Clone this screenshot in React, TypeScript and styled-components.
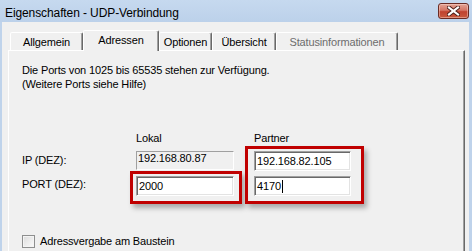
import React from "react";
import styled, { createGlobalStyle } from "styled-components";

const GlobalStyle = createGlobalStyle`
  html, body {
    margin: 0;
    padding: 0;
    background: #f0f0f0;
  }
  body {
    font-family: "Liberation Sans", Arial, sans-serif;
    color: #000;
    letter-spacing: -0.15px;
  }
`;

const tabs = [
  { label: "Allgemein", width: 73 },
  { label: "Adressen", width: 76, active: true },
  { label: "Optionen", width: 53 },
  { label: "Übersicht", width: 64 },
  { label: "Statusinformationen", width: 122, disabled: true },
];

const App = () => {
  return (
    <>
      <GlobalStyle />
      <Window>
        <TitleBar>
          <Title>Eigenschaften - UDP-Verbindung</Title>
          <CloseButton aria-label="Schließen">
            <svg width="13" height="10" viewBox="0 0 13 10">
              <path
                d="M2 1.5 L11 8.5 M11 1.5 L2 8.5"
                stroke="#4a1d18"
                strokeWidth="4"
                strokeLinecap="square"
              />
              <path
                d="M2 1.5 L11 8.5 M11 1.5 L2 8.5"
                stroke="#ffffff"
                strokeWidth="2.2"
                strokeLinecap="square"
              />
            </svg>
          </CloseButton>
        </TitleBar>

        <Body>
          <TabRow>
            {tabs.map(t => (
              <Tab
                key={t.label}
                $width={t.width}
                $active={!!t.active}
                $disabled={!!t.disabled}
              >
                {t.label}
              </Tab>
            ))}
          </TabRow>

          <Panel>
            <Intro>
              Die Ports von 1025 bis 65535 stehen zur Verfügung.
              <br />
              (Weitere Ports siehe Hilfe)
            </Intro>

            <FieldGrid>
              <ColumnHeader $col={2} $indent={6}>
                Lokal
              </ColumnHeader>
              <ColumnHeader $col={3} $indent={9}>
                Partner
              </ColumnHeader>

              <RowLabel $row={2} $offset={8}>
                IP (DEZ):
              </RowLabel>
              <RowLabel $row={3} $offset={7}>
                PORT (DEZ):
              </RowLabel>

              <StaticField>192.168.80.87</StaticField>

              <LocalHighlight>
                <EditField>2000</EditField>
              </LocalHighlight>

              <PartnerHighlight>
                <EditField>192.168.82.105</EditField>
                <EditField>
                  4170
                  <Caret />
                </EditField>
              </PartnerHighlight>
            </FieldGrid>

            <CheckRow>
              <CheckBox />
              <CheckLabel>Adressvergabe am Baustein</CheckLabel>
            </CheckRow>
          </Panel>
        </Body>
      </Window>
    </>
  );
};
export default App;

const Window = styled.div`
  width: 472px;
  height: 251px;
  overflow: hidden;
  display: flex;
  flex-direction: column;
  background: #bfd3eb;
`;

const TitleBar = styled.div`
  height: 22px;
  flex-shrink: 0;
  display: flex;
  align-items: flex-start;
  justify-content: space-between;
  padding: 0 3px 0 5px;
  background: linear-gradient(#c6d9ef, #bcd1ea);
`;

const Title = styled.div`
  margin-top: 6px;
  font-size: 12px;
  line-height: 14px;
  letter-spacing: -0.1px;
  color: #000;
  white-space: nowrap;
`;

const CloseButton = styled.div`
  margin-top: 3px;
  width: 31px;
  height: 16px;
  box-sizing: border-box;
  border: 1px solid #6a2b24;
  border-radius: 3px;
  background: linear-gradient(#e3a496 0%, #d47564 45%, #c0422f 55%, #c85a3f 100%);
  box-shadow: inset 0 0 0 1px rgba(255, 220, 210, 0.45);
  display: flex;
  align-items: center;
  justify-content: center;
`;

const Body = styled.div`
  flex: 1;
  margin: 0 3px 0 2px;
  padding: 8px 4px 0 6px;
  background: #f0f0f0;
  display: flex;
  flex-direction: column;
`;

const TabRow = styled.div`
  display: flex;
  align-items: flex-end;
  height: 20px;
  margin-left: 2px;
  flex-shrink: 0;
`;

const Tab = styled.div<{ $width: number; $active: boolean; $disabled: boolean }>`
  position: relative;
  z-index: ${p => (p.$active ? 2 : 1)};
  box-sizing: border-box;
  width: ${p => p.$width}px;
  height: ${p => (p.$active ? 21 : 18)}px;
  margin-bottom: ${p => (p.$active ? -1 : 0)}px;
  padding-top: 3px;
  border: 1px solid;
  border-bottom: none;
  border-color: #ffffff #696969 transparent #ffffff;
  border-radius: 2px 2px 0 0;
  box-shadow: inset -1px 0 #a0a0a0;
  background: #f0f0f0;
  font-size: 11px;
  line-height: 13px;
  text-align: center;
  white-space: nowrap;
  color: ${p => (p.$disabled ? "#6d6d6d" : "#000")};
`;

const Panel = styled.div`
  flex: 1;
  border-top: 1px solid #ffffff;
  border-left: 1px solid #ffffff;
  border-right: 1px solid #696969;
  box-shadow: inset -1px 0 #a0a0a0;
  padding: 12px 0 0 13px;
`;

const Intro = styled.p`
  margin: 0;
  font-size: 11px;
  line-height: 14px;
`;

const FieldGrid = styled.div`
  margin-top: 41px;
  display: grid;
  grid-template-columns: 105px 112px 119px;
  grid-template-rows: 14px 25px 33px;
  column-gap: 3px;
  font-size: 11px;
  line-height: 13px;
`;

const ColumnHeader = styled.div<{ $col: number; $indent: number }>`
  grid-row: 1;
  grid-column: ${p => p.$col};
  padding-left: ${p => p.$indent}px;
`;

const RowLabel = styled.div<{ $row: number; $offset: number }>`
  grid-column: 1;
  grid-row: ${p => p.$row};
  margin-top: ${p => p.$offset}px;
`;

const StaticField = styled.div`
  grid-column: 2;
  grid-row: 2;
  margin: 5px 8px 0 6px;
  height: 19px;
  box-sizing: border-box;
  border: 1px solid;
  border-color: #a0a0a0 #ffffff #ffffff #a0a0a0;
  padding-left: 1px;
  line-height: 13px;
`;

const Highlight = styled.div`
  box-sizing: border-box;
  border: 3px solid #c00000;
  box-shadow: 3px 4px 5px rgba(0, 0, 0, 0.3);
`;

const LocalHighlight = styled(Highlight)`
  grid-column: 2;
  grid-row: 3;
  padding: 2px 5px 5px 3px;
`;

const PartnerHighlight = styled(Highlight)`
  grid-column: 3;
  grid-row: 2 / 4;
  align-self: start;
  padding: 2px 10px 5px 6px;
  display: flex;
  flex-direction: column;
  gap: 5px;
`;

const EditField = styled.div`
  height: 20px;
  box-sizing: border-box;
  border: 1px solid;
  border-color: #a0a0a0 #ffffff #ffffff #a0a0a0;
  box-shadow: inset 1px 1px #696969, inset -1px -1px #e3e3e3;
  background: #ffffff;
  padding-left: 2px;
  line-height: 18px;
  display: flex;
  align-items: center;
`;

const Caret = styled.span`
  display: inline-block;
  width: 1px;
  height: 13px;
  margin-left: 1px;
  background: #000;
`;

const CheckRow = styled.div`
  margin-top: 31px;
  display: flex;
  align-items: center;
  gap: 5px;
`;

const CheckBox = styled.div`
  width: 13px;
  height: 13px;
  box-sizing: border-box;
  border: 1px solid #8e8f8f;
  box-shadow: inset 0 0 0 1px #f4f4f4;
  background: linear-gradient(135deg, #dcdcdc, #fbfbfb);
`;

const CheckLabel = styled.span`
  font-size: 11px;
  line-height: 13px;
`;
